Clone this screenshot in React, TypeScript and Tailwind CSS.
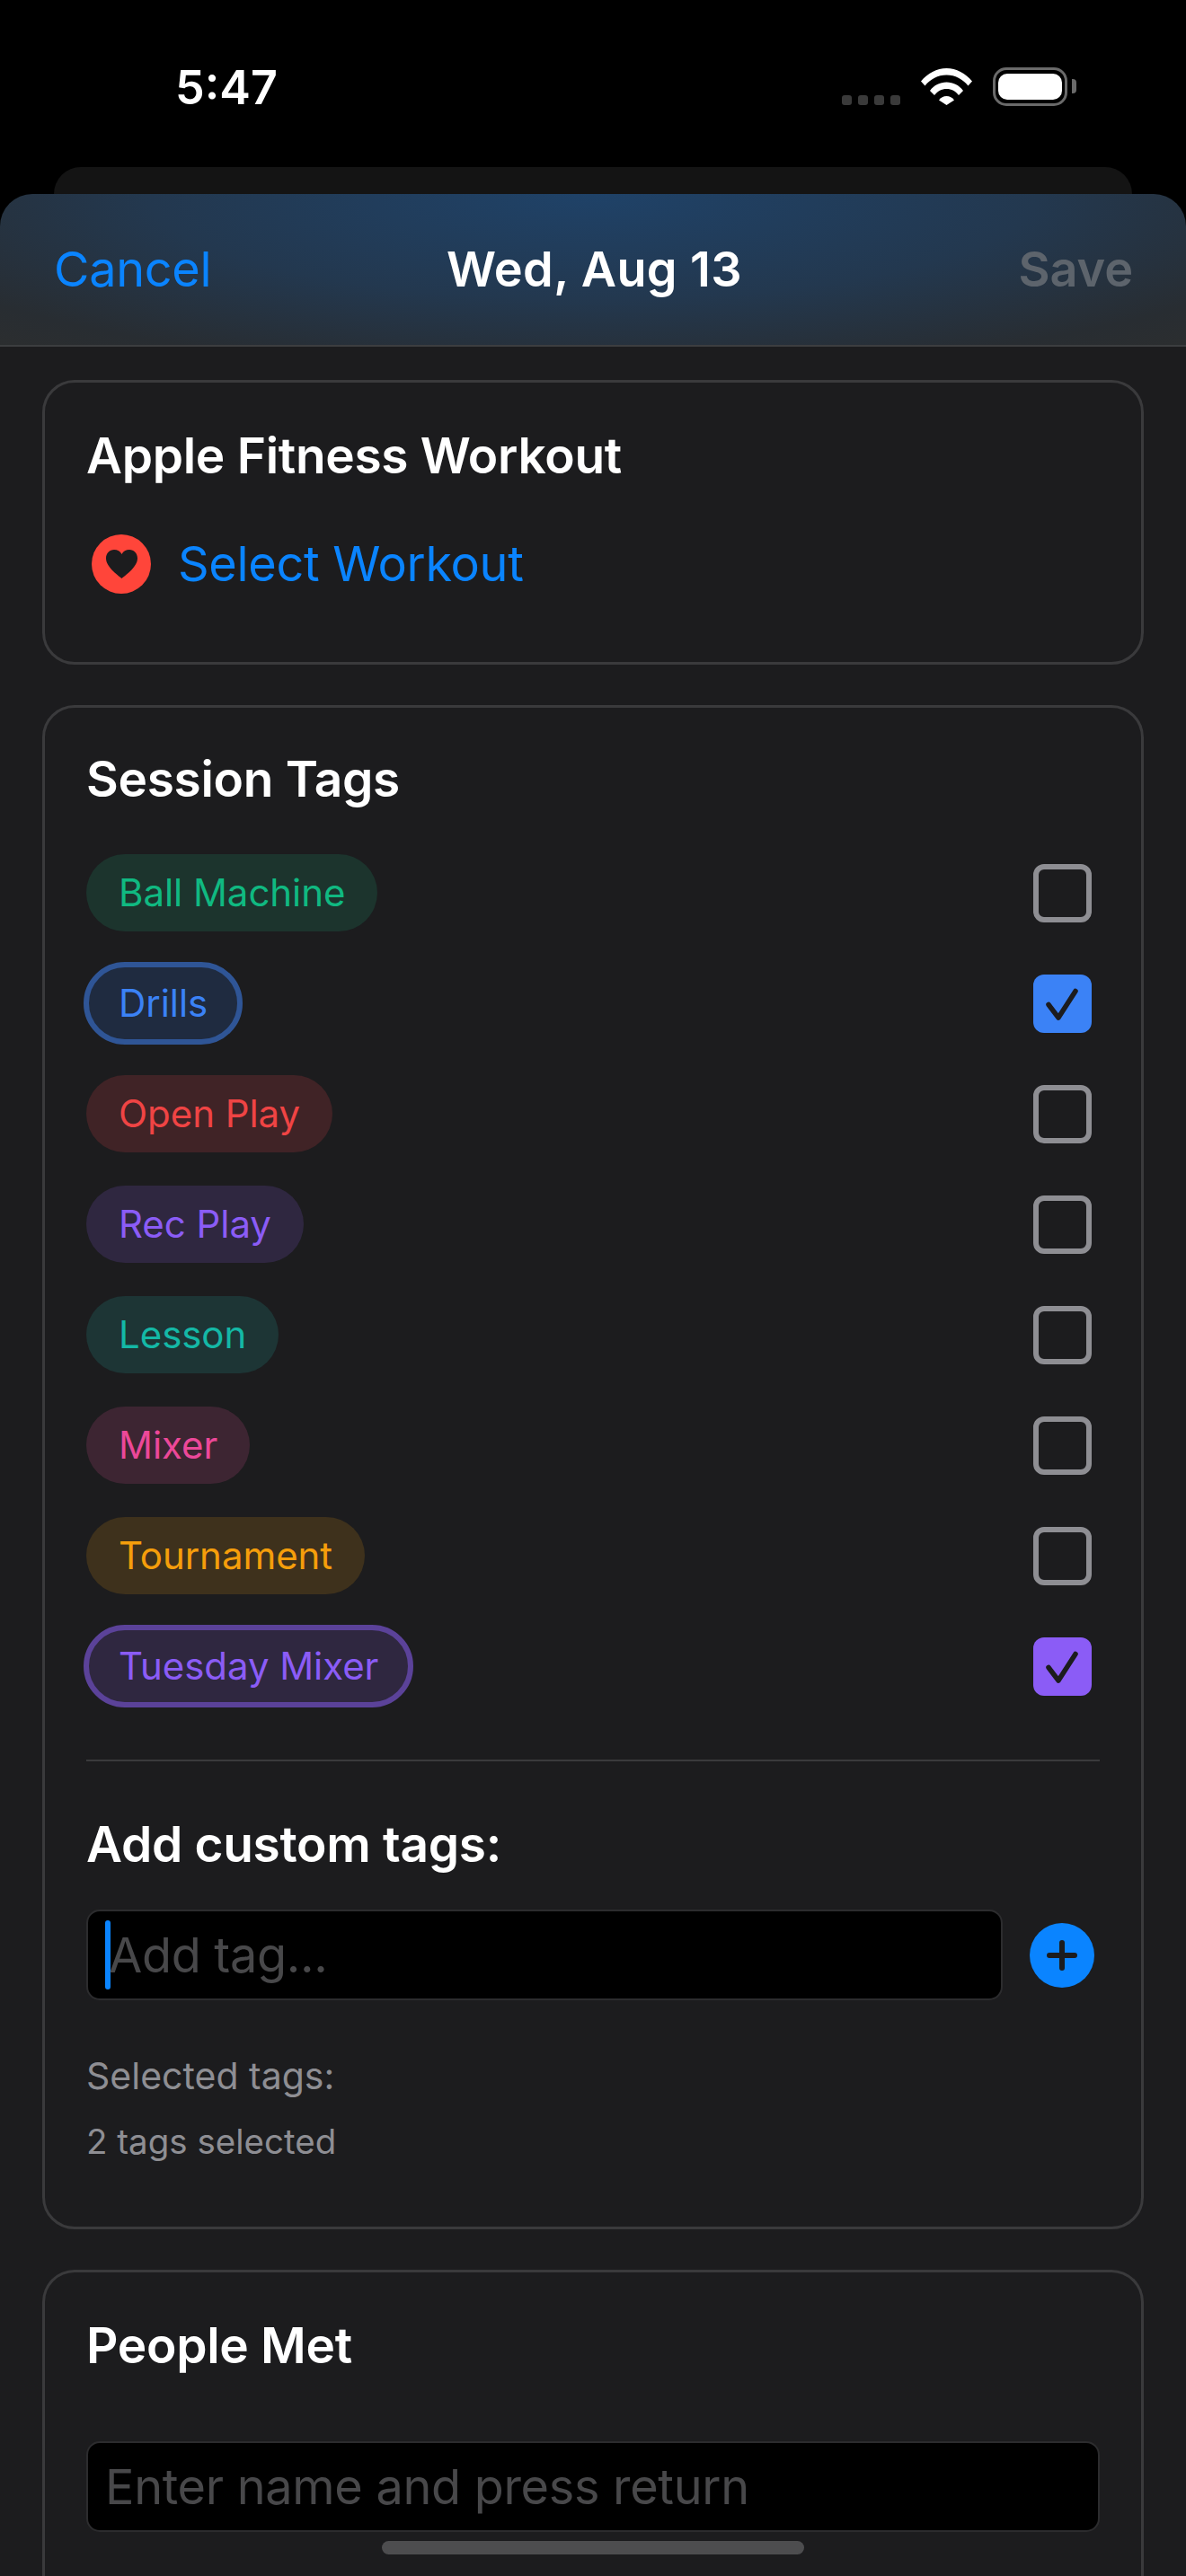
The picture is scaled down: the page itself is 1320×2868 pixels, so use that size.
const font = "font-['Inter','Liberation_Sans',sans-serif]";

type Tag = {
  label: string;
  text: string;
  bg: string;
  ring?: string;
  box?: string;
};

const TAGS: Tag[] = [
  { label: "Ball Machine", text: "text-[#10b981]", bg: "bg-[#1c342d]" },
  { label: "Drills", text: "text-[#3b82f6]", bg: "bg-[#1f2b40]", ring: "outline-[#2f5596]", box: "bg-[#3b82f6]" },
  { label: "Open Play", text: "text-[#ef4444]", bg: "bg-[#402326]" },
  { label: "Rec Play", text: "text-[#8b5cf6]", bg: "bg-[#2f2740]" },
  { label: "Lesson", text: "text-[#14b8a6]", bg: "bg-[#1d3535]" },
  { label: "Mixer", text: "text-[#ec4899]", bg: "bg-[#3d2532]" },
  { label: "Tournament", text: "text-[#f59e0b]", bg: "bg-[#3e311c]" },
  { label: "Tuesday Mixer", text: "text-[#8b5cf6]", bg: "bg-[#2f2740]", ring: "outline-[#5b4299]", box: "bg-[#8b5cf6]" },
];

const heading = "text-[55px] font-semibold leading-[64px] tracking-[-0.3px] text-white";
const field = "rounded-[15px] border-[2px] border-[#2c2c2e] bg-black";
const placeholder = "text-[54px] leading-[64px] tracking-[-0.3px] text-[#48484a]";

function StatusBar() {
  return (
    <div className="flex h-[186px] items-start justify-between bg-black pl-[195px] pr-[122px]">
      <span className="mt-[68px] text-[52px] font-semibold leading-[60px] text-white">5:47</span>
      <div className="mt-[75px] flex items-start">
        <div className="mt-[31px] flex gap-[7px]">
          <div className="h-[11px] w-[11px] rounded-[3px] bg-[#3a3a3a]" />
          <div className="h-[11px] w-[11px] rounded-[3px] bg-[#3a3a3a]" />
          <div className="h-[11px] w-[11px] rounded-[3px] bg-[#3a3a3a]" />
          <div className="h-[11px] w-[11px] rounded-[3px] bg-[#3a3a3a]" />
        </div>
        <svg className="ml-[23px] mt-[1px]" width="57" height="41" viewBox="0 0 57 41" fill="white">
          <path d="M0 14.5C7.5 5.5 17.5 0 28.5 0S49.5 5.5 57 14.5L52.5 19.5C46.5 12 38 7.5 28.5 7.5S10.500 12 4.500 19.500Z" />
          <path d="M10 25C14.500 19 21 15.500 28.500 15.500S42.500 19 47 25L42 30C38.500 25.500 34 23 28.500 23S18.500 25.500 15 30Z" />
          <path d="M20 35.500C22 32.500 25 31 28.500 31S35 32.500 37 35.500L28.500 41Z" />
        </svg>
        <div className="ml-[23px] flex h-[43px] w-[83px] items-center justify-center rounded-[15px] border-[3px] border-[#6a6a6a]">
          <div className="h-[29px] w-[71px] rounded-[10px] bg-white" />
        </div>
        <div className="ml-[5px] mt-[13px] h-[16px] w-[5px] rounded-r-[4px] bg-[#6a6a6a]" />
      </div>
    </div>
  );
}

function NavBar() {
  return (
    <div className="relative flex h-[170px] items-center justify-between rounded-t-[36px] border-b-[2px] border-[#3c3e40] bg-[radial-gradient(ellipse_75%_140%_at_50%_0%,#1f4268_0%,#23384f_50%,#282d32_85%,#2c2e2f_100%)] pl-[60px] pr-[59px]">
      <span className="text-[54px] leading-[60px] tracking-[-0.3px] text-[#0a84ff]">Cancel</span>
      <span className="absolute left-[497px] top-[54px] text-[54px] font-semibold leading-[60px] tracking-[0.4px] text-white">Wed, Aug 13</span>
      <span className="text-[54px] font-semibold leading-[60px] tracking-[-0.1px] text-[#5d646c]">Save</span>
    </div>
  );
}

function CheckBox({ color }: { color?: string }) {
  if (!color) {
    return <div className="h-[65px] w-[65px] rounded-[12px] border-[6px] border-[#8e8e93]" />;
  }
  return (
    <div className={`h-[65px] w-[65px] rounded-[12px] ${color}`}>
      <svg width="65" height="65" viewBox="0 0 65 65" fill="none" stroke="#1c1c1e" strokeWidth="5.500" strokeLinecap="round" strokeLinejoin="round">
        <path d="M17 33.500L28 48L47 18.500" />
      </svg>
    </div>
  );
}

function TagRow({ tag }: { tag: Tag }) {
  return (
    <div className="flex h-[86px] items-center justify-between pr-[9px]">
      <div
        className={`flex h-[86px] items-center rounded-full px-[36px] text-[42px] leading-[50px] tracking-[-0.05px] ${tag.bg} ${tag.text} ${
          tag.ring ? `outline-[6px] outline-offset-[-3px] outline-solid ${tag.ring}` : ""
        }`}
      >
        {tag.label}
      </div>
      <CheckBox color={tag.box} />
    </div>
  );
}

export default function App() {
  return (
    <div className={`relative h-[2868px] w-[1320px] overflow-hidden bg-black ${font}`}>
      <StatusBar />
      <div className="mx-[60px] h-[30px] rounded-t-[36px] bg-[#141414]" />
      <NavBar />
      <div className="h-[2482px] bg-[#1c1c1e] px-[47px] pt-[37px]">
        <section className="h-[317px] rounded-[36px] border-[3px] border-[#3a3a3c] px-[46px] pt-[49px]">
          <h2 className={heading}>Apple Fitness Workout</h2>
          <div className="mt-[56px] flex items-center gap-[30px] pl-[6px]">
            <div className="flex h-[66px] w-[66px] items-center justify-center rounded-full bg-[#ff453a]">
              <svg width="35" height="32" viewBox="0 0 35 32" fill="#1c1c1e">
                <path d="M17.500 32C15 29.500 0 20 0 9.500C0 4 4 0 9 0C12.800 0 15.800 1.800 17.500 5C19.200 1.800 22.200 0 26 0C31 0 35 4 35 9.500C35 20 20 29.500 17.500 32Z" />
              </svg>
            </div>
            <span className="text-[54px] leading-[64px] tracking-[-0.3px] text-[#0a84ff]">Select Workout</span>
          </div>
        </section>

        <section className="mt-[45px] h-[1697px] rounded-[36px] border-[3px] border-[#3a3a3c] px-[46px] pt-[47px]">
          <h2 className={heading}>Session Tags</h2>
          <div className="mt-[52px] flex flex-col gap-[37px]">
            {TAGS.map((tag) => (
              <TagRow key={tag.label} tag={tag} />
            ))}
          </div>
          <div className="mt-[61px] h-[2px] bg-[#3a3a3c]" />
          <h3 className={`mt-[60px] ${heading}`}>Add custom tags:</h3>
          <div className="mt-[41px] flex items-center justify-between">
            <div className={`flex h-[101px] w-[1020px] items-center pl-[19px] ${field}`}>
              <div className="h-[77px] w-[6px] rounded-full bg-[#0a84ff]" />
              <span className={`-ml-[2px] ${placeholder}`}>Add tag...</span>
            </div>
            <div className="mr-[6px] flex h-[72px] w-[72px] items-center justify-center rounded-full bg-[#0a84ff]">
              <svg width="34" height="34" viewBox="0 0 34 34" fill="none" stroke="#1c1c1e" strokeWidth="6" strokeLinecap="round">
                <path d="M17 3V31M3 17H31" />
              </svg>
            </div>
          </div>
          <p className="mt-[59px] text-[41px] leading-[50px] text-[#8e8e93]">Selected tags:</p>
          <p className="mt-[23px] text-[38.500px] leading-[50px] text-[#8e8e93]">2 tags selected</p>
        </section>

        <section className="mt-[45px] h-[400px] rounded-t-[36px] border-[3px] border-b-0 border-[#3a3a3c] px-[46px] pt-[49px]">
          <h2 className={heading}>People Met</h2>
          <div className={`mt-[75px] flex h-[101px] items-center pl-[19px] ${field}`}>
            <span className={placeholder}>Enter name and press return</span>
          </div>
        </section>
      </div>
      <div className="absolute left-[425px] top-[2829px] h-[15px] w-[470px] rounded-full bg-[#4d4d4f]" />
    </div>
  );
}
